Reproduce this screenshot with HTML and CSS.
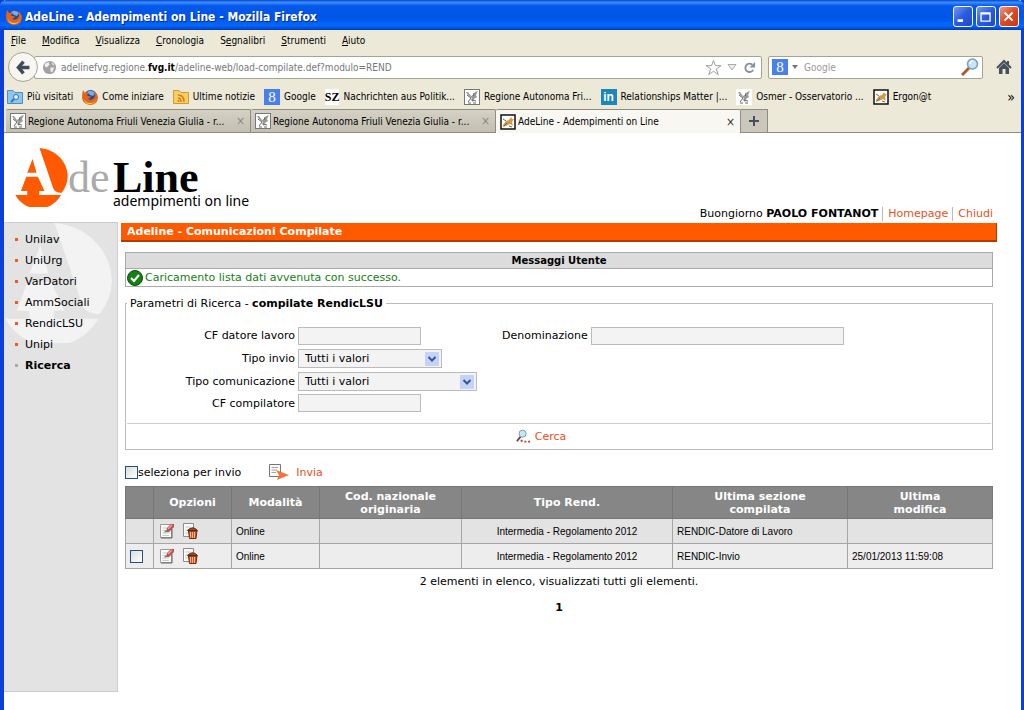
FILE: index.html
```html
<!DOCTYPE html>
<html lang="it">
<head>
<meta charset="utf-8">
<title>AdeLine - Adempimenti on Line</title>
<link rel="stylesheet" href="styles.css">
</head>
<body>
<svg class="defs" aria-hidden="true">
  <symbol id="mark" viewBox="0 0 158 178">
    <path d="M73 0C122 4 158 42 158 87Q157 113 140 135Q122 136 115 124Z"/>
    <path d="M52 33L64 75H36ZM33 87H68L88 130H72V142H138A79 79 0 0 1 0 142H36V130H17Z"/>
  </symbol>
  <symbol id="firefox" viewBox="0 0 16 16">
    <circle cx="8.5" cy="7.5" r="6.5" fill="#244a94"/>
    <path d="M5 3Q9 0 13 4L11 7L8 6Z" fill="#6fb0e8"/>
    <path d="M1 1L3 4Q5 3 7 4L5 6Q6 8 9 7Q8 10 6 10Q9 12 12 9Q14 6 12 2Q16 5 16 9Q15 16 8 16Q1 15 0 9Q0 5 1 1Z" fill="#e0651a"/>
    <path d="M14 5Q16 14 8 14Q4 14 2 10Q3 16 9 15Q16 14 14 5Z" fill="#f9c440"/>
  </symbol>
  <symbol id="eagle" viewBox="0 0 16 16">
    <path d="M0 0H16V16H0Z" fill="#fff"/>
    <path d="M2 3L4 3L7 7L9 6L11 3L14 2L12 6L13 8L10 10L9 13L7 11L8 9L4 6Z" fill="#999"/>
    <path d="M3 6L7 9L4 13M10 4L9 7M4 14H7M9 14H12M8 11L12 12" fill="none" stroke="#666"/>
  </symbol>
  <symbol id="cat" viewBox="0 0 16 16">
    <path d="M1 1H15V15H1Z" fill="#fff" stroke="#111" stroke-width="1.5"/>
    <path d="M3 11L6 7L9 6L11 3L12 5L14 5L12 8L13 12L10 10L6 12L3 13Z" fill="#d39a4a"/>
    <path d="M3 5L6 7M9 12L12 13M4 12L7 9" stroke="#76613c" fill="none"/>
  </symbol>
  <symbol id="edit" viewBox="0 0 16 16">
    <path d="M1.500 1.500H12.500V14.500H1.500Z" fill="#fafafa" stroke="#999"/>
    <path d="M2 15H13V6" stroke="#666" fill="none"/>
    <path d="M3.500 5H8M3.500 7.500H7M3.500 10H10M3.500 12.500H10" stroke="#c4ccc4"/>
    <path d="M7 9L8 5L12 1H15V4L10 9Z" fill="#b9504d"/>
    <path d="M9 6L13 2" stroke="#efa49c" stroke-width="1.500"/><path d="M5 9.500L7 7L8 9Z" fill="#4f8d55"/>
  </symbol>
  <symbol id="trash" viewBox="0 0 16 16">
    <path d="M1.500 .5H11.500V13.500H1.500Z" fill="#fafafa" stroke="#8c8c8c"/>
    <path d="M3.500 4H8M3.500 7H6M3.500 10H6" stroke="#b7cfa8"/>
    <path d="M6.500 8H15L14 15.500H7.500Z" fill="#c2562c" stroke="#6b2c12"/>
    <path d="M5.500 7.500Q10.500 2 15.500 7.500Z" fill="#9e4a22" stroke="#5d2610"/>
    <path d="M8.500 9V15M10.500 9V15M12.500 9V15" stroke="#ffad7c"/>
  </symbol>
  <symbol id="lens" viewBox="0 0 18 18">
    <path d="M1 17L8 10" stroke="#a4602d" stroke-width="3"/>
    <circle cx="11.500" cy="6" r="5" fill="#c4e6fb" stroke="#779dbd" stroke-width="1.500"/>
    <path d="M9 6Q9 3 12 3" stroke="#fff" stroke-width="1.500" fill="none"/>
  </symbol>
</svg>

<div class="window">
  <header class="titlebar">
    <svg class="ico"><use href="#firefox"/></svg>
    <span class="title">AdeLine - Adempimenti on Line - Mozilla Firefox</span>
    <button class="win" aria-label="Riduci"><svg viewBox="0 0 20 20"><path d="M4 14H10" stroke="#fff" stroke-width="3"/></svg></button>
    <button class="win" aria-label="Ingrandisci"><svg viewBox="0 0 20 20"><path d="M4.500 5.500H14.500V14.500H4.500ZM4.500 6.500H14.500" stroke="#fff" stroke-width="1.500" fill="none"/></svg></button>
    <button class="win close" aria-label="Chiudi finestra"><svg viewBox="0 0 20 20"><path d="M5 5L14 14M14 5L5 14" stroke="#fff" stroke-width="2.200"/></svg></button>
  </header>

  <div class="chrome">
    <nav class="menu" aria-label="Menu">
      <button><u>F</u>ile</button><button><u>M</u>odifica</button><button><u>V</u>isualizza</button><button><u>C</u>ronologia</button><button>S<u>e</u>gnalibri</button><button><u>S</u>trumenti</button><button><u>A</u>iuto</button>
    </nav>
    <div class="nav">
      <button class="back" aria-label="Indietro"><svg viewBox="0 0 20 20"><path d="M10 3L4 10L10 17M5 10H17" fill="none" stroke="#3f4b5a" stroke-width="4"/></svg></button>
      <div class="url">
        <svg class="globe" viewBox="0 0 16 16"><circle cx="8" cy="8" r="7" fill="#a2a2a2"/><path d="M3 4L7 2L8 5L5 8L3 7ZM9 8L13 8L11 13L9 12ZM10 3L13 4L12 6Z" fill="#eee"/></svg>
        <div class="address">adelinefvg.regione.<b>fvg.it</b>/adeline-web/load-compilate.def?modulo=REND</div>
        <svg class="star" viewBox="0 0 18 18"><path d="M9 1.500L11 7H17L12 10.500L14 16.500L9 13L4 16.500L6 10.500L1 7H7Z" fill="#fff" stroke="#9a9a9a"/></svg>
        <svg class="drop" viewBox="0 0 10 10"><path d="M1 2.500H9L5 8Z" fill="#eee" stroke="#aaa"/></svg>
        <svg class="reload" viewBox="0 0 14 14"><path d="M11 9.500A4.500 4.500 0 1 1 10 4" fill="none" stroke="#87909b" stroke-width="2"/><path d="M13 1V7H7Z" fill="#87909b"/></svg>
      </div>
      <div class="search">
        <span class="g">8</span>
        <svg class="caret" viewBox="0 0 6 4"><path d="M0 0H6L3 4Z" fill="#777"/></svg>
        <input type="text" aria-label="Cerca con Google" placeholder="Google">
        <svg class="find"><use href="#lens"/></svg>
      </div>
      <svg class="home" viewBox="0 0 16 16"><path d="M1 9L8 2L15 9M12 2V6" fill="none" stroke="#46505d" stroke-width="2"/><path d="M3 9L8 4L13 9V15H9.500V10H6.500V15H3Z" fill="#46505d"/></svg>
    </div>
    <nav class="marks" aria-label="Segnalibri">
      <a href="#"><svg class="ico" viewBox="0 0 16 16"><path d="M.5 1.500H6L8 3.500H15.500V14.500H.5Z" fill="#8ec5ea" stroke="#4a8dbf"/><circle cx="9" cy="8" r="2.500" fill="#dff1fc" stroke="#2f78b0"/><path d="M7 10L4 13" stroke="#2f78b0" stroke-width="2"/></svg>Più visitati</a>
      <a href="#"><svg class="ico"><use href="#firefox"/></svg>Come iniziare</a>
      <a href="#"><svg class="ico" viewBox="0 0 16 16"><path d="M.5 1.500H6L8 3.500H15.500V14.500H.5Z" fill="#f8cf63" stroke="#d09a2c"/><path d="M5 6Q11 6 11 13M5 9Q8 9 8 13" fill="none" stroke="#e0781a" stroke-width="1.500"/><circle cx="5.500" cy="12" r="1" fill="#e0781a"/></svg>Ultime notizie</a>
      <a href="#"><span class="g">8</span>Google</a>
      <a href="#"><span class="sz">SZ</span>Nachrichten aus Politik...</a>
      <a href="#"><svg class="ico boxed"><use href="#eagle"/></svg>Regione Autonoma Fri...</a>
      <a href="#"><span class="in">in</span>Relationships Matter |...</a>
      <a href="#"><svg class="ico"><use href="#eagle"/></svg>Osmer - Osservatorio ...</a>
      <a href="#"><svg class="ico"><use href="#cat"/></svg>Ergon@t</a>
      <button class="more" aria-label="Altri segnalibri">»</button>
    </nav>
    <div class="tabs">
      <div class="tab"><svg class="ico boxed"><use href="#eagle"/></svg><span>Regione Autonoma Friuli Venezia Giulia - r...</span><button aria-label="Chiudi scheda">×</button></div>
      <div class="tab"><svg class="ico boxed"><use href="#eagle"/></svg><span>Regione Autonoma Friuli Venezia Giulia - r...</span><button aria-label="Chiudi scheda">×</button></div>
      <div class="tab active"><svg class="ico"><use href="#cat"/></svg><span>AdeLine - Adempimenti on Line</span><button aria-label="Chiudi scheda">×</button></div>
      <button class="plus" aria-label="Nuova scheda"><svg viewBox="0 0 10 10"><path d="M5 0V10M0 5H10" stroke="#46505d" stroke-width="2"/></svg></button>
    </div>
  </div>

  <div class="page">
    <div class="top">
      <div class="logo">
        <svg class="mark"><use href="#mark"/></svg>
        <span class="de">de</span>
        <div class="line"><span class="name">Line</span><span class="tag">adempimenti on line</span></div>
      </div>
      <div class="user"><span>Buongiorno <b>PAOLO FONTANOT</b></span><a href="#">Homepage</a><a href="#">Chiudi</a></div>
    </div>
    <div class="body">
      <aside class="side">
        <svg class="water"><use href="#mark"/></svg>
        <ul>
          <li><a href="#">Unilav</a></li><li><a href="#">UniUrg</a></li><li><a href="#">VarDatori</a></li><li><a href="#">AmmSociali</a></li><li><a href="#">RendicLSU</a></li><li><a href="#">Unipi</a></li><li class="current"><a href="#">Ricerca</a></li>
        </ul>
      </aside>
      <main class="main">
        <h1>Adeline - Comunicazioni Compilate</h1>
        <div class="content">
          <section class="msg">
            <h2>Messaggi Utente</h2>
            <p><svg class="ok" viewBox="0 0 16 16"><circle cx="8" cy="8" r="7.500" fill="#158015" stroke="#0b4f0b"/><path d="M4 8L7 11L12 5" fill="none" stroke="#fff" stroke-width="2"/></svg>Caricamento lista dati avvenuta con successo.</p>
          </section>
          <form>
            <fieldset>
              <legend>Parametri di Ricerca - <b>compilate RendicLSU</b></legend>
              <div class="fields">
                <label for="cf">CF datore lavoro</label><input id="cf" class="short" type="text">
                <label for="den">Denominazione</label><input id="den" class="long" type="text">
                <label class="first" for="invio">Tipo invio</label>
                <span class="sel narrow"><select id="invio"><option>Tutti i valori</option></select><svg viewBox="0 0 14 14"><path d="M0 0H14V14H0Z" fill="#c3d3fc"/><path d="M3.500 5L7 8.500L10.500 5" fill="none" stroke="#3c5590" stroke-width="2"/></svg></span>
                <label class="first" for="com">Tipo comunicazione</label>
                <span class="sel wide"><select id="com"><option>Tutti i valori</option></select><svg viewBox="0 0 14 14"><path d="M0 0H14V14H0Z" fill="#c3d3fc"/><path d="M3.500 5L7 8.500L10.500 5" fill="none" stroke="#3c5590" stroke-width="2"/></svg></span>
                <label class="first" for="comp">CF compilatore</label><input id="comp" class="short" type="text">
              </div>
              <div class="go"><button type="button"><svg viewBox="0 0 16 16"><path d="M1 13L5 8" stroke="#5d4a45" stroke-width="2"/><circle cx="7" cy="5" r="3.800" fill="#c4e8f8" stroke="#7798ae"/><path d="M5 12.500H7M9 13.500H11M13 13.500H15" stroke="#a83a30" stroke-width="2"/></svg>Cerca</button></div>
            </fieldset>
          </form>
          <div class="actions">
            <label><input type="checkbox">seleziona per invio</label>
            <button type="button"><svg viewBox="0 0 20 16"><path d="M.5 .5H11.500V12.500H.5Z" fill="#fafafa" stroke="#777"/><path d="M2.500 3.500H9M2.500 6H8M2.500 8.500H7" stroke="#a6a6a6"/><path d="M7 6L20 11L8 16L10 11Z" fill="#f4743b"/></svg>Invia</button>
          </div>
          <table>
            <colgroup><col class="c1"><col class="c2"><col class="c3"><col class="c4"><col><col class="c6"><col class="c7"></colgroup>
            <thead><tr><th></th><th>Opzioni</th><th>Modalità</th><th>Cod. nazionale<br>originaria</th><th>Tipo Rend.</th><th>Ultima sezione<br>compilata</th><th>Ultima<br>modifica</th></tr></thead>
            <tbody>
              <tr><td></td><td><div class="ops"><button aria-label="Modifica"><svg><use href="#edit"/></svg></button><button aria-label="Elimina"><svg><use href="#trash"/></svg></button></div></td><td>Online</td><td></td><td class="mid">Intermedia - Regolamento 2012</td><td>RENDIC-Datore di Lavoro</td><td></td></tr>
              <tr><td><input type="checkbox" aria-label="Seleziona riga"></td><td><div class="ops"><button aria-label="Modifica"><svg><use href="#edit"/></svg></button><button aria-label="Elimina"><svg><use href="#trash"/></svg></button></div></td><td>Online</td><td></td><td class="mid">Intermedia - Regolamento 2012</td><td>RENDIC-Invio</td><td>25/01/2013 11:59:08</td></tr>
            </tbody>
          </table>
          <p class="count">2 elementi in elenco, visualizzati tutti gli elementi.</p>
          <p class="pager">1</p>
        </div>
      </main>
    </div>
  </div>
</div>
</body>
</html>
```
FILE: styles.css
```css
* { box-sizing: border-box; }
body { margin: 0; background: #fff; color: #000; font-family: "DejaVu Sans", Verdana, sans-serif; font-size: 11px; }
button { border: 0; padding: 0; background: none; font: inherit; color: inherit; }
a { color: inherit; text-decoration: none; }
p, h1, h2, ul { margin: 0; padding: 0; }
svg { flex: none; display: block; }
.defs { display: none; }
.ico { width: 16px; height: 16px; flex: none; }
.boxed { outline: 1px solid #777; outline-offset: -1px; }

.window { min-height: 100vh; display: flex; flex-direction: column; border: solid #0a3fdc; border-width: 0 3px 0 4px; }
.titlebar { display: flex; align-items: center; gap: 3px; height: 30px; margin: 0 -3px 0 -4px; padding: 3px 5px 0 6px; border-radius: 6px 6px 0 0; background: linear-gradient(#0a46c8, #3a8cff 8%, #0458ea 20%, #0055e6 60%, #0068ff 85%, #003dbb); color: #fff; font: bold 12px "DejaVu Sans Condensed", "DejaVu Sans", sans-serif; text-shadow: 1px 1px #0a2a80; }
.title { flex: 1; }
.win { width: 20px; height: 21px; border: 1px solid #fff; border-radius: 3px; background: linear-gradient(135deg, #6f97f5, #2a5be0 50%, #1c49c8); }
.win svg { width: 18px; height: 18px; }
.close { background: linear-gradient(135deg, #f0967c, #dd4a22 50%, #c53a14); }

.chrome { background: #ece9d8; font-family: "DejaVu Sans Condensed", Tahoma, sans-serif; font-size: 10px; }
.menu { display: flex; gap: 16px; height: 20px; padding: 0 7px; align-items: center; }
.nav { display: flex; align-items: center; height: 34px; padding: 0 9px 0 4px; }
.back { width: 30px; height: 30px; border: 1px solid #a5a296; border-radius: 50%; background: #f7f6f0; display: grid; place-items: center; z-index: 1; }
.back svg { width: 17px; height: 17px; }
.url, .search { display: flex; align-items: center; height: 23px; border: 1px solid #a5a296; border-radius: 2px; background: #fff; }
.url { flex: 1; margin-left: -4px; padding: 0 5px 0 7px; color: #777; }
.url b { color: #000; }
.address { flex: 1; }
.globe { width: 15px; height: 15px; margin-right: 4px; }
.star { width: 17px; height: 17px; margin-right: 5px; }
.drop { width: 10px; height: 10px; margin-right: 6px; }
.reload { width: 13px; height: 13px; }
.search { width: 215px; margin: 0 13px 0 6px; padding: 0 3px; }
.search input { flex: 1; min-width: 0; border: 0; padding: 0; font: inherit; background: none; }
.search input::placeholder { color: #999; }
.g { width: 16px; height: 16px; background: #4a7fee; color: #fff; font: 15px/16px "Liberation Serif", serif; text-align: center; flex: none; }
.caret { width: 6px; height: 4px; margin: 0 6px 0 4px; }
.find { width: 18px; height: 18px; }
.home { width: 16px; height: 16px; }
.marks { display: flex; align-items: center; gap: 9px; height: 25px; padding: 0 6px 0 3px; white-space: nowrap; }
.marks a { display: flex; align-items: center; gap: 4px; }
.sz { background: #fff; font: bold 12px/16px "Liberation Serif", serif; }
.in { width: 16px; height: 16px; background: #1b87b9; color: #fff; font: bold 12px/16px "Liberation Sans", sans-serif; text-align: center; }
.more { margin-left: auto; font-size: 14px; }
.tabs { display: flex; height: 24px; padding-left: 2px; border-bottom: 1px solid #8f8d80; }
.tab { display: flex; align-items: center; gap: 2px; flex: 0 1 245px; min-width: 0; padding: 0 5px 0 4px; border: solid #8f8d80; border-width: 1px 1px 0 0; border-radius: 2px 2px 0 0; background: linear-gradient(#d5d2c5, #c2bfb1); white-space: nowrap; }
.tab span { flex: 1; overflow: hidden; }
.tab button { color: #888; font-size: 12px; }
.tab.active { background: #f8f7f1; margin-bottom: -1px; }
.tab.active button { color: #333; }
.plus { width: 27px; display: grid; place-items: center; border: solid #8f8d80; border-width: 1px 1px 0 0; background: #cbc8bb; }
.plus svg { width: 10px; height: 10px; }

.page { flex: 1; background: #fff; padding-bottom: 18px; display: flex; flex-direction: column; }
.top { display: flex; justify-content: space-between; align-items: flex-end; min-height: 89px; padding: 0 28px 0 11px; }
.logo { display: flex; align-items: flex-start; align-self: flex-start; padding-top: 15px; }
.mark { width: 53px; height: 59px; fill: #ff5a00; }
.de, .name { font: 44px/32px "Liberation Serif", serif; padding-top: 14px; }
.de { color: #aaa; width: 45px; }
.line { display: flex; flex-direction: column; }
.name { font-weight: bold; }
.tag { font: 14px/14px "Noto Sans", sans-serif; }
.user { display: flex; line-height: 14px; padding-bottom: 1px; }
.user a { color: #e8501a; border-left: 1px solid #bbb; margin-left: 4px; padding-left: 5px; }
.body { flex: 1; display: flex; gap: 3px; }
.side { position: relative; width: 114px; flex: none; background: #e3e3e3; border: solid #ccc; border-width: 1px 1px 1px 0; padding-top: 6px; }
.water { position: absolute; left: 0; top: 0; width: 109px; height: 120px; fill: #f3f3f3; }
.side ul { position: relative; list-style: none; }
.side li { display: flex; align-items: center; gap: 7px; padding-left: 11px; line-height: 21px; min-height: 21px; }
.side li::before { content: ""; width: 3px; height: 3px; background: #ee5a24; }
.side .current { font-weight: bold; }
.side .current::before { background: #aaa; }
.main { flex: 1; min-width: 0; padding-right: 24px; padding-top: 1px; }
h1 { font-size: 11px; line-height: 17px; height: 19px; padding-left: 6px; color: #fff; background: #ff5a00; border: solid #b03c00; border-width: 0 1px 2px 0; }
.content { padding: 10px 4px 0; }
.msg { border: 1px solid #aaa; }
.msg h2 { background: #dcdcdc; border-bottom: 1px solid #aaa; font-size: 10px; line-height: 15px; text-align: center; }
.msg p { display: flex; align-items: center; gap: 2px; padding: 1px; height: 17px; color: #158015; }
.ok { width: 16px; height: 16px; }
fieldset { margin: 9px 0 0; padding: 0 1px; border: 1px solid #bbb; min-width: 0; }
legend { padding: 0 3px; line-height: 15px; }
.fields { display: grid; grid-template-columns: 168px 201px auto 1fr; grid-template-rows: 19px 20px 20px 18px; gap: 3px; align-items: center; padding: 15px 0 11px; }
.fields label { text-align: right; }
.first { grid-column: 1; }
.fields input { height: 18px; border: 1px solid #bbb; background: #f3f3f3; padding: 0 4px; font: inherit; }
.short { width: 123px; }
.long { width: 253px; }
.sel { position: relative; grid-column: 2 / -1; }
.narrow { width: 144px; }
.wide { width: 179px; }
.sel select { appearance: none; width: 100%; height: 19px; border: 1px solid #bbb; border-radius: 0; background: #f3f3f3; padding: 0 20px 0 6px; font: inherit; color: #000; display: block; }
.sel svg { position: absolute; right: 3px; top: 3px; width: 14px; height: 14px; pointer-events: none; }
.go { border-top: 1px solid #ccc; display: flex; justify-content: center; padding: 4px 36px 4px 0; }
.go button, .actions button { display: flex; align-items: center; gap: 4px; color: #e8501a; line-height: 17px; }
.go svg { width: 15px; height: 15px; }
.actions { display: flex; align-items: center; gap: 28px; height: 24px; margin: 10px 0 2px; }
.actions label { display: flex; align-items: center; }
.actions svg { width: 20px; height: 16px; }
.actions button { gap: 7px; }
input[type=checkbox] { appearance: none; width: 13px; height: 13px; margin: 0; border: 1px solid #1d5180; background: linear-gradient(135deg, #dcdcd7, #fff); display: block; }
table { width: 100%; table-layout: fixed; border-collapse: collapse; border: 1px solid #999; }
.c1 { width: 28px; } .c2 { width: 78px; } .c3 { width: 88px; } .c4 { width: 142px; } .c6 { width: 175px; } .c7 { width: 145px; }
th { height: 32px; padding: 0; background: #868686; border: 1px solid #777; color: #fff; line-height: 13px; }
td { height: 25px; padding: 0 4px; border: 1px solid #a5a5a5; background: #e3e3e3; font-family: "Liberation Sans", Arial, sans-serif; font-size: 10px; }
tr:last-child td { background: #ededed; }
.mid { text-align: center; }
.ops { display: flex; gap: 7px; padding-left: 1px; }
.ops svg { width: 16px; height: 16px; }
.count, .pager { text-align: center; line-height: 15px; margin-top: 5px; }
.pager { font-weight: bold; margin-top: 11px; }
```
